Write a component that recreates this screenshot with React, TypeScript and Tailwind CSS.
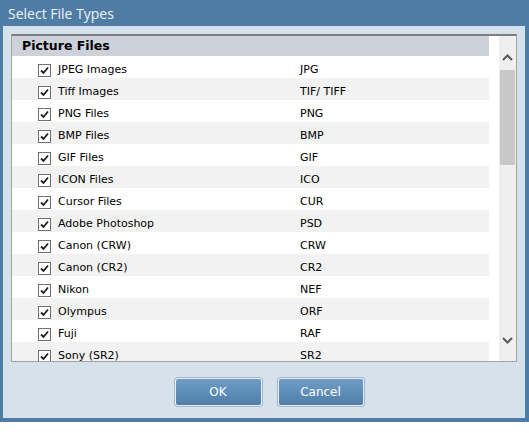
import React from 'react'

const files = [
  { name: 'JPEG Images', ext: 'JPG' },
  { name: 'Tiff Images', ext: 'TIF/ TIFF' },
  { name: 'PNG Files', ext: 'PNG' },
  { name: 'BMP Files', ext: 'BMP' },
  { name: 'GIF Files', ext: 'GIF' },
  { name: 'ICON Files', ext: 'ICO' },
  { name: 'Cursor Files', ext: 'CUR' },
  { name: 'Adobe Photoshop', ext: 'PSD' },
  { name: 'Canon (CRW)', ext: 'CRW' },
  { name: 'Canon (CR2)', ext: 'CR2' },
  { name: 'Nikon', ext: 'NEF' },
  { name: 'Olympus', ext: 'ORF' },
  { name: 'Fuji', ext: 'RAF' },
  { name: 'Sony (SR2)', ext: 'SR2' },
]

function Check() {
  return (
    <div className="flex h-[13px] w-[13px] shrink-0 items-center justify-center border border-[#707070] bg-white">
      <svg width="9" height="9" viewBox="0 0 9 9">
        <path d="M1 4.5 L3.5 7 L8 1.5" fill="none" stroke="#1c1c1c" strokeWidth="1.8" />
      </svg>
    </div>
  )
}

export default function App() {
  return (
    <div className="h-[433px] w-[529px] bg-white font-['DejaVu_Sans',sans-serif]">
      <div className="flex h-[422px] flex-col bg-[#4f7ca4] pb-[4px] pl-[3px] pr-[4px]">
        <div className="flex h-[26px] items-center pl-[5px] text-[14px] text-[#eef3f8] font-['Open_Sans',sans-serif]">
          Select File Types
        </div>
        <div className="flex flex-1 flex-col bg-[#d6e2eb] px-[8px] pt-[8px]">
          {/* list box */}
          <div className="flex h-[328px] border border-t-2 border-[#a3a3a3] border-t-[#7d7d7d] bg-white">
            <div className="w-[477px] overflow-hidden">
              <div className="flex h-[20px] items-center bg-[#cdd1d9] pl-[10px] text-[12.5px] font-bold text-black">
                Picture Files
              </div>
              {files.map((f, i) => (
                <div
                  key={f.name}
                  className={`flex h-[22px] items-center pt-[7px] text-[11px] text-black ${i % 2 ? 'bg-[#f2f2f2]' : 'bg-white'}`}
                >
                  <div className="ml-[26px] mr-[7px]">
                    <Check />
                  </div>
                  <span className="w-[242px]">{f.name}</span>
                  <span>{f.ext}</span>
                </div>
              ))}
            </div>
            <div className="w-[10px]" />
            {/* scrollbar */}
            <div className="flex w-[17px] flex-col bg-[#efefef]">
              <div className="flex h-[34px] items-center justify-center pt-[8px]">
                <svg width="11" height="7" viewBox="0 0 11 7">
                  <path d="M1 6 L5.5 1.5 L10 6" fill="none" stroke="#5a5a5a" strokeWidth="2" />
                </svg>
              </div>
              <div className="mx-[1px] h-[95px] bg-[#c8c8c8]" />
              <div className="flex-1" />
              <div className="flex h-[32px] items-center justify-center pb-[10px]">
                <svg width="11" height="7" viewBox="0 0 11 7">
                  <path d="M1 1 L5.5 5.5 L10 1" fill="none" stroke="#5a5a5a" strokeWidth="2" />
                </svg>
              </div>
            </div>
          </div>
          {/* buttons */}
          <div className="mt-[16px] flex justify-center gap-[16px] pl-[10px]">
            <button className="h-[28px] w-[87px] rounded-[3px] border border-[#e6eef5] bg-gradient-to-b from-[#6d9cc6] to-[#4f7fa9] text-[12px] text-white shadow-[0_0_0_1px_#9fb7cc]">
              OK
            </button>
            <button className="h-[28px] w-[86px] rounded-[3px] border border-[#e6eef5] bg-gradient-to-b from-[#6d9cc6] to-[#4f7fa9] text-[12px] text-white shadow-[0_0_0_1px_#9fb7cc]">
              Cancel
            </button>
          </div>
        </div>
      </div>
    </div>
  )
}
